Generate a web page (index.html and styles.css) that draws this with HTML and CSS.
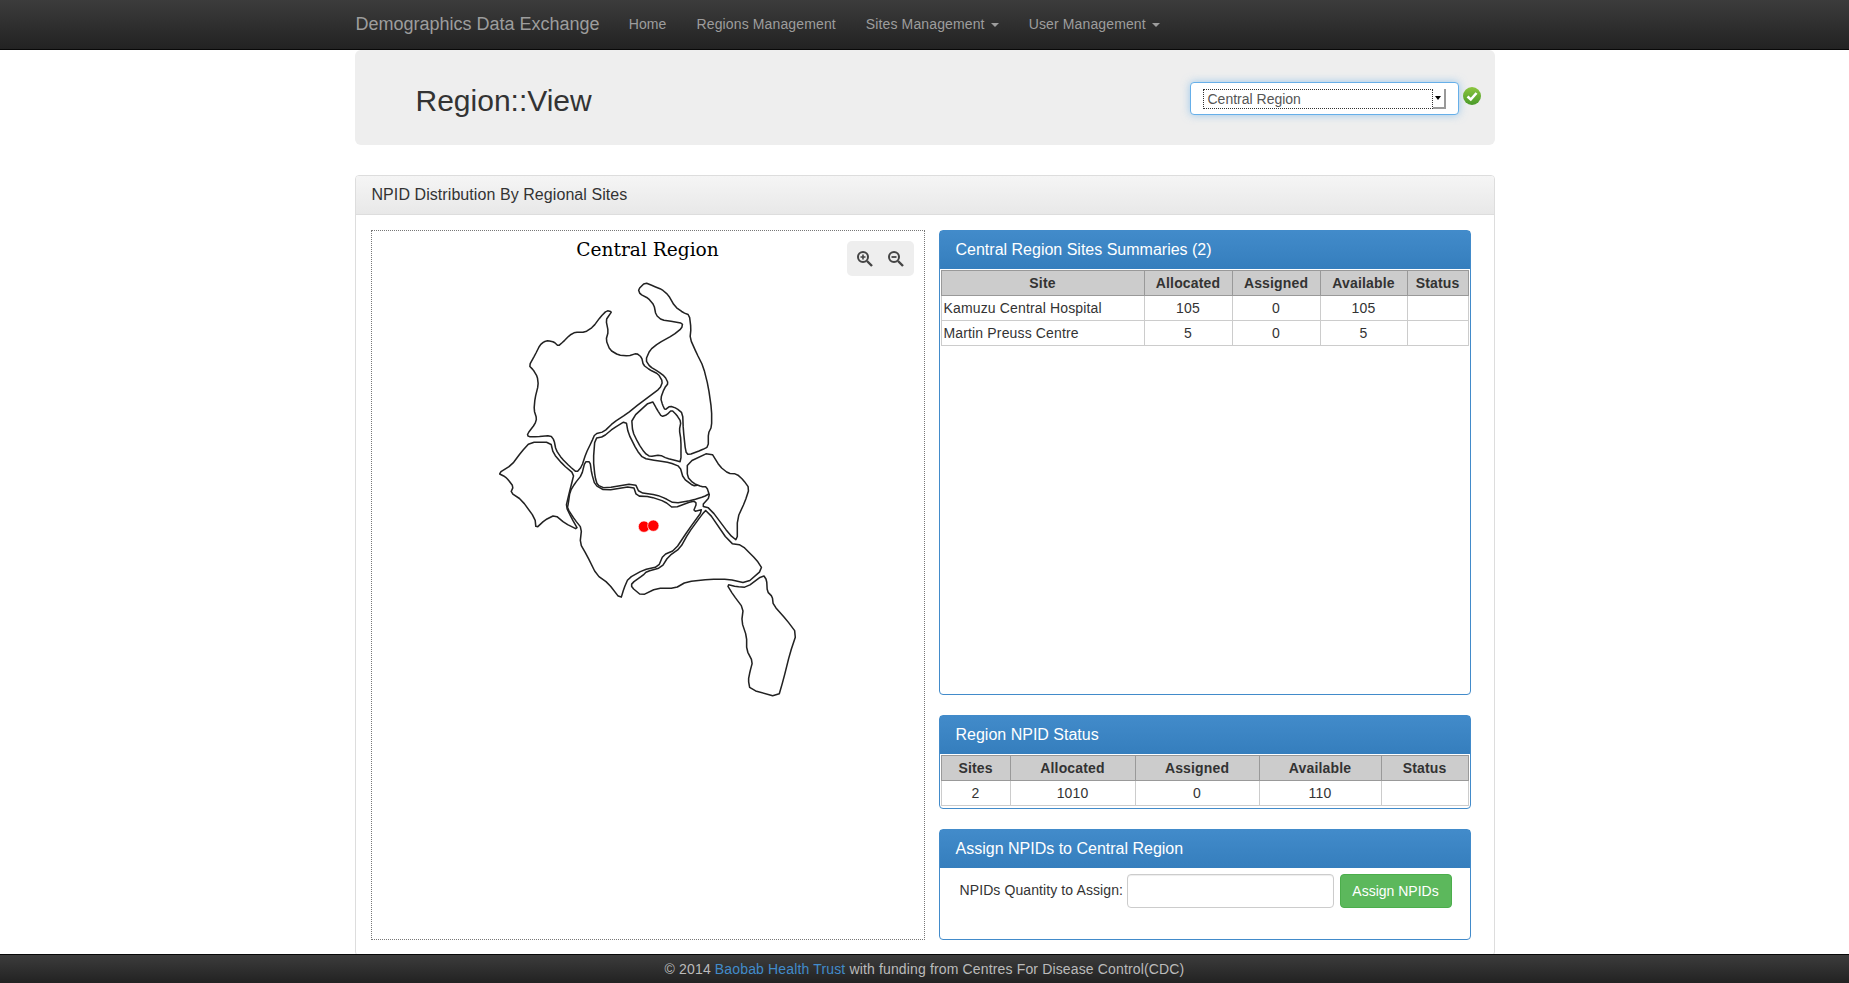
FILE: index.html
```html
<!DOCTYPE html>
<html lang="en">
<head>
    <meta charset="UTF-8">
    <title>Region::View</title>
    <link rel="stylesheet" href="styles.css">
</head>
<body>
    <div class="navbar">
        <div class="container nav_inner">
            <a class="brand">Demographics Data Exchange</a>
            <a class="nav_link">Home</a>
            <a class="nav_link">Regions Management</a>
            <a class="nav_link">Sites Management <span class="caret"></span></a>
            <a class="nav_link">User Management <span class="caret"></span></a>
        </div>
    </div>

    <div class="main">
        <div class="container">
            <div class="jumbotron">
                <h1 class="page_title">Region::View</h1>
                <div class="select_group">
                    <div class="select_box">
                        <div class="select_value">Central Region</div>
                        <div class="select_arrow"><span class="select_tri"></span></div>
                    </div>
                    <svg class="ok_icon" viewBox="0 0 18 18" width="18" height="18">
                        <defs>
                            <linearGradient id="ok_grad" x1="0" y1="0" x2="0" y2="1">
                                <stop offset="0" stop-color="#8cc63f"/>
                                <stop offset="1" stop-color="#4a9a2a"/>
                            </linearGradient>
                        </defs>
                        <circle cx="9" cy="9" r="9" fill="url(#ok_grad)"/>
                        <path d="M4.5 9.5 L7.8 12.5 L13.5 6" fill="none" stroke="#fff" stroke-width="2.6"/>
                    </svg>
                </div>
            </div>

            <div class="panel">
                <div class="panel_heading">NPID Distribution By Regional Sites</div>
                <div class="panel_body">
                    <div class="map_box">
                        <div class="map_title">Central Region</div>
                        <div class="map_tools">
                            <svg viewBox="0 0 18 18" width="18" height="18">
                                <circle cx="7" cy="7" r="5" fill="none" stroke="#444" stroke-width="2"/>
                                <path d="M4.5 7 H9.5 M7 4.5 V9.5" stroke="#444" stroke-width="1.6"/>
                                <path d="M11 11 L16 16" stroke="#444" stroke-width="2.4"/>
                            </svg>
                            <svg viewBox="0 0 18 18" width="18" height="18">
                                <circle cx="7" cy="7" r="5" fill="none" stroke="#444" stroke-width="2"/>
                                <path d="M4.5 7 H9.5" stroke="#444" stroke-width="1.8"/>
                                <path d="M11 11 L16 16" stroke="#444" stroke-width="2.4"/>
                            </svg>
                        </div>
                        <svg class="map_svg" viewBox="372 231 552 708">
                            <g transform="translate(480 270) scale(0.3333)" fill="#fff" stroke="#222" stroke-width="4.6" stroke-linejoin="round">
                                <polygon class="district" points="147,287 165,255 180,225 192,215 205,212 222,216 235,228 250,215 270,195 285,187 315,187 340,170 362,140 380,122 395,125 388,135 378,150 385,185 378,210 390,240 415,255 445,258 470,250 485,262 490,285 510,300 535,312 548,335 540,355 510,378 480,400 440,432 400,458 372,485 345,492 335,515 318,550 305,590 290,607 270,590 245,565 228,540 222,510 212,497 170,500 145,500 142,492 165,462 170,445 162,420 165,385 175,345 172,320 160,300"/>
                                <polygon class="district" points="495,38 520,48 545,58 565,75 585,110 610,128 628,135 633,175 630,205 650,250 670,290 685,350 695,420 695,470 685,490 685,530 665,540 625,555 617,545 610,480 608,430 590,415 570,408 555,420 548,405 542,385 553,355 565,340 555,320 535,305 510,290 497,270 510,240 535,220 580,195 605,175 608,160 580,155 545,150 528,135 522,105 505,85 480,72 475,58"/>
                                <polygon class="district" points="515,390 532,420 545,440 560,435 575,420 590,435 603,455 598,480 603,510 603,576 590,572 560,565 540,555 510,560 495,550 475,520 458,485 455,445"/>
                                <polygon class="district" points="345,505 370,500 400,475 438,452 445,490 470,540 490,565 530,572 570,578 600,590 610,625 640,648 655,645 680,640 690,670 672,680 640,690 583,700 555,685 530,675 478,668 465,640 375,655 352,645 345,620 340,570"/>
                                <polygon class="district" points="692,545 720,590 745,610 770,612 790,630 808,655 795,695 772,745 772,813 750,795 690,715 665,708 690,680 680,650 665,650 640,640 622,620 622,578"/>
                                <polygon class="district" points="680,718 750,820 785,825 830,870 848,898 800,940 745,928 690,928 620,935 585,955 530,955 485,977 455,952 455,940 490,915 500,905 545,892 565,860 600,835 625,790 665,735"/>
                                <polygon class="district" points="330,575 315,575 305,615 285,640 270,665 265,700 262,715 285,750 305,775 300,820 320,855 350,915 385,940 422,988 432,955 445,925 490,900 535,890 550,855 585,840 625,780 670,718 640,725 650,700 640,692 580,715 555,695 510,680 470,678 460,648 375,662 345,645 335,610"/>
                                <polygon class="district" points="150,517 212,517 220,550 250,585 282,612 275,640 265,680 258,710 275,745 295,780 255,760 225,735 195,750 168,775 165,745 125,690 92,668 100,650 85,630 75,620 55,610 95,585 125,545"/>
                                <polygon class="district" points="740,943 770,950 800,952 850,915 860,930 862,965 877,980 880,1005 920,1050 950,1090 930,1150 910,1230 895,1282 810,1258 805,1230 810,1205 818,1175 800,1140 800,1100 785,1055 790,1015 760,975"/>
                                <circle cx="492" cy="770" r="17" fill="#f00" stroke="#fff" stroke-width="2"/>
                                <circle cx="520" cy="767" r="17" fill="#f00" stroke="#fff" stroke-width="2"/>
                            </g>
                        </svg>
                    </div>

                    <div class="side_col">
                        <div class="blue_panel grow">
                            <div class="blue_heading">Central Region Sites Summaries (2)</div>
                            <table class="data_table">
                                <colgroup>
                                    <col class="w203"><col class="w88"><col class="w88"><col class="w87"><col class="w61">
                                </colgroup>
                                <tr><th>Site</th><th>Allocated</th><th>Assigned</th><th>Available</th><th>Status</th></tr>
                                <tr><td class="left">Kamuzu Central Hospital</td><td>105</td><td>0</td><td>105</td><td></td></tr>
                                <tr><td class="left">Martin Preuss Centre</td><td>5</td><td>0</td><td>5</td><td></td></tr>
                            </table>
                        </div>

                        <div class="blue_panel">
                            <div class="blue_heading">Region NPID Status</div>
                            <table class="data_table">
                                <colgroup>
                                    <col class="w69"><col class="w125"><col class="w124"><col class="w122"><col class="w87">
                                </colgroup>
                                <tr><th>Sites</th><th>Allocated</th><th>Assigned</th><th>Available</th><th>Status</th></tr>
                                <tr><td>2</td><td>1010</td><td>0</td><td>110</td><td></td></tr>
                            </table>
                        </div>

                        <div class="blue_panel">
                            <div class="blue_heading">Assign NPIDs to Central Region</div>
                            <div class="assign_row">
                                <label class="assign_label">NPIDs Quantity to Assign:</label>
                                <input class="assign_input" type="text">
                                <button class="assign_btn">Assign NPIDs</button>
                            </div>
                        </div>
                    </div>
                </div>
            </div>
        </div>
    </div>

    <div class="footer">&copy; 2014 <a class="footer_link">Baobab Health Trust</a> with funding from Centres For Disease Control(CDC)</div>

    <script src="map.js"></script>
</body>
</html>
```

FILE: styles.css
```css
* {
    box-sizing: border-box;
}

html, body {
    margin: 0;
    padding: 0;
    height: 100%;
}

body {
    display: flex;
    flex-direction: column;
    height: 100vh;
    overflow: hidden;
    font-family: "Liberation Sans", Arial, sans-serif;
    font-size: 14px;
    color: #333;
    background-color: #fff;
}

.container {
    width: 1140px;
    margin-left: auto;
    margin-right: auto;
}

/* top bar */
.navbar {
    flex: none;
    height: 50px;
    background-image: linear-gradient(#3c3c3c, #222);
    border-bottom: 1px solid #080808;
}

.nav_inner {
    display: flex;
    align-items: center;
    height: 49px;
}

.brand {
    font-size: 18px;
    color: #9d9d9d;
    padding-left: 1px;
    padding-right: 29px;
}

.nav_link {
    color: #9d9d9d;
    padding-right: 30px;
    margin-bottom: 2px;
    letter-spacing: 0.13px;
}

.caret {
    display: inline-block;
    width: 0;
    height: 0;
    margin-left: 2px;
    vertical-align: middle;
    border-top: 4px solid #9d9d9d;
    border-left: 4px solid transparent;
    border-right: 4px solid transparent;
}

.main {
    flex: 1;
    overflow: hidden;
}

/* page head */
.jumbotron {
    display: flex;
    justify-content: space-between;
    align-items: flex-start;
    height: 95px;
    padding: 32px 14px 0 61px;
    margin-bottom: 30px;
    background-color: #eee;
    border-radius: 6px;
}

.page_title {
    margin: 2px 0 0 0;
    font-size: 30px;
    line-height: 34px;
    font-weight: 400;
}

.select_group {
    display: flex;
    align-items: flex-start;
}

.select_box {
    display: flex;
    width: 269px;
    height: 33px;
    padding: 6px 12px 0 12px;
    background-color: #fff;
    border: 1px solid #66afe9;
    border-radius: 4px;
    box-shadow: 0 0 8px rgba(102, 175, 233, 0.6);
}

.select_value {
    width: 231px;
    height: 20px;
    padding-left: 4px;
    line-height: 18px;
    color: #555;
    border: 1px dotted #333;
}

.select_arrow {
    display: flex;
    align-items: center;
    justify-content: center;
    width: 13px;
    height: 20px;
    border-right: 2px solid #999;
    border-bottom: 2px solid #999;
}

.select_tri {
    width: 0;
    height: 0;
    border-top: 4px solid #000;
    border-left: 3px solid transparent;
    border-right: 3px solid transparent;
}

.ok_icon {
    margin: 5px 0 0 4px;
}

/* main panel */
.panel {
    border: 1px solid #ddd;
    border-radius: 4px;
}

.panel_heading {
    height: 39px;
    padding-left: 16px;
    font-size: 16px;
    line-height: 37px;
    letter-spacing: 0.07px;
    background-image: linear-gradient(#f5f5f5, #e8e8e8);
    border-bottom: 1px solid #ddd;
    border-radius: 3px 3px 0 0;
}

.panel_body {
    display: grid;
    grid-template-columns: 554px 532px;
    column-gap: 14px;
    padding: 15px 0 15px 15px;
}

/* map */
.map_box {
    position: relative;
    height: 710px;
    border: 1px dotted #777;
}

.map_title {
    padding-top: 7px;
    text-align: center;
    font-family: "DejaVu Serif", serif;
    font-size: 18.6px;
    line-height: 24px;
    color: #000;
}

.map_svg {
    position: absolute;
    top: 0;
    left: 0;
    width: 100%;
    height: 100%;
}

.map_tools {
    position: absolute;
    z-index: 1;
    top: 10px;
    right: 10px;
    display: flex;
    gap: 13px;
    align-items: center;
    width: 67px;
    height: 35px;
    padding: 0 0 0 9px;
    background-color: #eee;
    border-radius: 5px;
}

/* right column */
.side_col {
    display: flex;
    flex-direction: column;
    gap: 20px;
}

.blue_panel {
    border: 1px solid #428bca;
    border-radius: 4px;
}

.grow {
    flex: 1;
}

.blue_heading {
    height: 38px;
    padding-left: 16px;
    font-size: 16px;
    line-height: 37px;
    color: #fff;
    background-image: linear-gradient(#428bca, #357ebd);
}

.data_table {
    width: 527px;
    margin: 1px 1px 2px 1px;
    table-layout: fixed;
    border-collapse: collapse;
}

.data_table th, .data_table td {
    height: 25px;
    padding: 0;
    text-align: center;
    letter-spacing: 0.15px;
}

.data_table th {
    background-color: #ccc;
    border: 1px solid #999;
}

.data_table td {
    border: 1px solid #ccc;
}

.data_table td.left {
    padding-left: 2px;
    text-align: left;
}

.w203 { width: 203px; }
.w88 { width: 88px; }
.w87 { width: 87px; }
.w61 { width: 61px; }
.w69 { width: 69px; }
.w125 { width: 125px; }
.w124 { width: 124px; }
.w122 { width: 122px; }

/* assign form */
.assign_row {
    display: flex;
    align-items: flex-start;
    height: 71px;
    padding: 6px 0 0 20px;
}

.assign_label {
    width: 167px;
    line-height: 32px;
    letter-spacing: 0.1px;
}

.assign_input {
    width: 207px;
    height: 34px;
    margin-right: 6px;
    background-color: #fff;
    border: 1px solid #ccc;
    border-radius: 4px;
    box-shadow: inset 0 1px 1px rgba(0, 0, 0, 0.075);
}

.assign_btn {
    width: 112px;
    height: 34px;
    font-family: inherit;
    font-size: 14px;
    color: #fff;
    background-color: #5cb85c;
    border: 1px solid #4cae4c;
    border-radius: 4px;
}

/* bottom bar */
.footer {
    flex: none;
    height: 29px;
    line-height: 29px;
    text-align: center;
    color: #bbb;
    letter-spacing: 0.15px;
    background-image: linear-gradient(#3c3c3c, #222);
    border-top: 1px solid #080808;
}

.footer_link {
    color: #428bca;
}
```

FILE: map.js
```js
// round off the traced district outlines (corner cutting)
function smooth(points) {
    let out = [];
    for (let i = 0; i < points.length; i++) {
        let a = points[i];
        let b = points[(i + 1) % points.length];
        out.push([a[0] * 0.8 + b[0] * 0.2, a[1] * 0.8 + b[1] * 0.2]);
        out.push([a[0] * 0.2 + b[0] * 0.8, a[1] * 0.2 + b[1] * 0.8]);
    }
    return out;
}

document.querySelectorAll(".district").forEach(function(shape) {
    let pts = shape.getAttribute("points").split(" ").map(function(p) {
        return p.split(",").map(Number);
    });
    shape.setAttribute("points", smooth(pts).map(function(p) { return p.join(","); }).join(" "));
});
```
